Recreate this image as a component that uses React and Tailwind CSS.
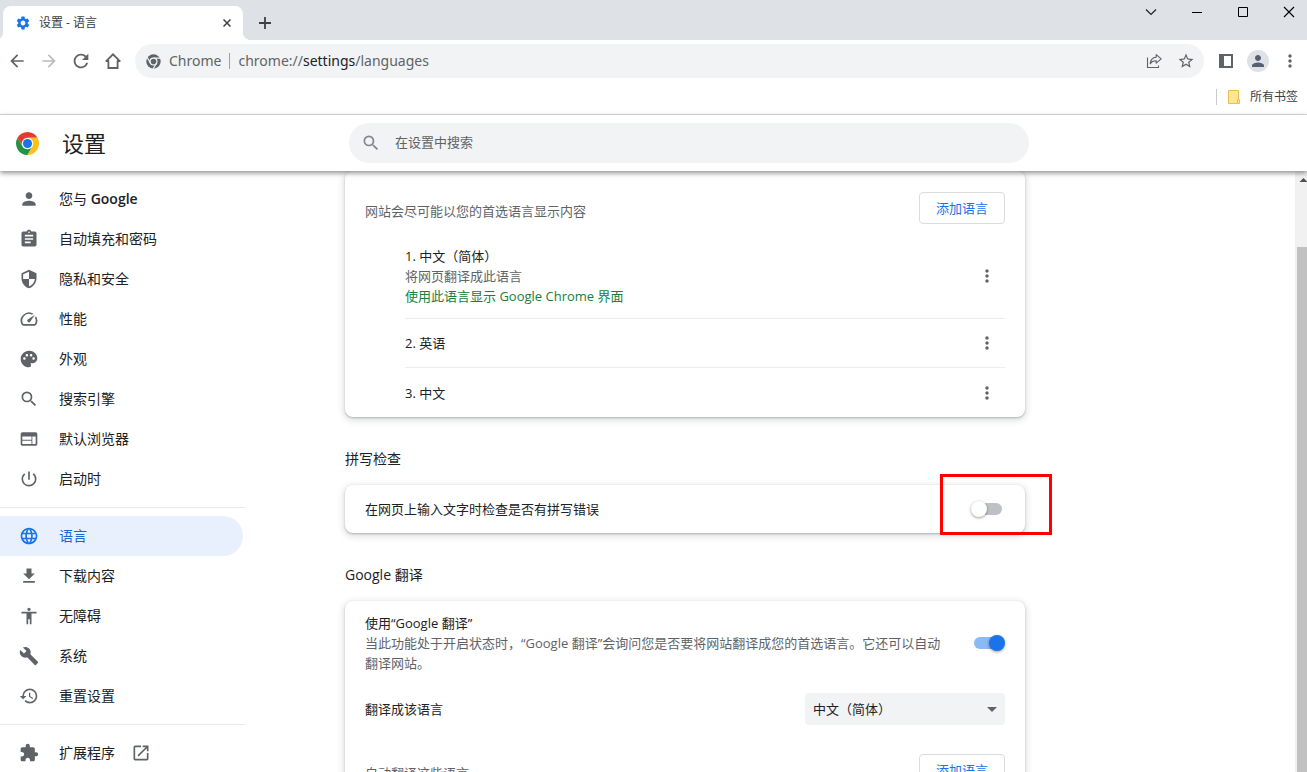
import { useState } from "react";
import {
  MdAccessibility,
  MdArrowBack,
  MdArrowDropDown,
  MdArrowForward,
  MdAssignment,
  MdBuild,
  MdExtension,
  MdFileDownload,
  MdLanguage,
  MdMoreVert,
  MdOpenInNew,
  MdPalette,
  MdPerson,
  MdPowerSettingsNew,
  MdRefresh,
  MdRestore,
  MdSearch,
  MdSecurity,
  MdSettings,
  MdSpeed,
  MdStarBorder,
  MdWeb,
} from "react-icons/md";

const mainLinks = [
  { id: "people", icon: MdPerson, label: <>您与 <span className="font-semibold">Google</span></> },
  { id: "autofill", icon: MdAssignment, label: "自动填充和密码" },
  { id: "privacy", icon: MdSecurity, label: "隐私和安全" },
  { id: "performance", icon: MdSpeed, label: "性能" },
  { id: "appearance", icon: MdPalette, label: "外观" },
  { id: "search", icon: MdSearch, label: "搜索引擎" },
  { id: "defaultBrowser", icon: MdWeb, label: "默认浏览器" },
  { id: "onStartup", icon: MdPowerSettingsNew, label: "启动时" },
];

const advancedLinks = [
  { id: "languages", icon: MdLanguage, label: "语言" },
  { id: "downloads", icon: MdFileDownload, label: "下载内容" },
  { id: "accessibility", icon: MdAccessibility, label: "无障碍" },
  { id: "system", icon: MdBuild, label: "系统" },
  { id: "reset", icon: MdRestore, label: "重置设置" },
];

const languages = [
  {
    name: "1. 中文（简体）",
    target: "将网页翻译成此语言",
    display: "使用此语言显示 Google Chrome 界面",
  },
  { name: "2. 英语" },
  { name: "3. 中文" },
];

function ChromeLogo() {
  return (
    <svg viewBox="0 0 48 48" className="size-[23px]" aria-hidden="true">
      <circle cx="24" cy="24" r="13" fill="#fff" />
      <path fill="#e33b2e" d="M24 12H44.78A24 24 0 0 0 3.22 12L13.61 30A12 12 0 0 1 24 12z" />
      <path fill="#229342" d="M13.61 30L3.22 12A24 24 0 0 0 24 48L34.39 30A12 12 0 0 1 13.61 30z" />
      <path fill="#fbc116" d="M34.39 30L24 48A24 24 0 0 0 44.78 12H24A12 12 0 0 1 34.39 30z" />
      <circle cx="24" cy="24" r="9.5" fill="#1a73e8" />
    </svg>
  );
}

function ChromeMono() {
  return (
    <svg viewBox="0 0 48 48" className="size-[15px]" aria-hidden="true">
      <circle cx="24" cy="24" r="23" fill="#5f6368" />
      <g fill="none" stroke="#f1f3f4" strokeWidth="4">
        <circle cx="24" cy="24" r="11" />
        <path d="M24 13H46M14.5 29.5L3.5 10.5M33.5 29.5L22.5 48" />
      </g>
    </svg>
  );
}

function ToolbarButton({ label, children }) {
  return (
    <button type="button" aria-label={label} className="flex size-8 shrink-0 items-center justify-center text-[#5f6368]">
      {children}
    </button>
  );
}

function TabStrip() {
  return (
    <div className="flex h-10 shrink-0 justify-between bg-[#dee1e6]">
      <div className="flex items-end pl-[3px]">
        <div className="relative flex h-[34px] w-60 items-center rounded-t-lg bg-white pr-2 pl-3 before:absolute before:bottom-0 before:-left-2 before:size-2 before:bg-[radial-gradient(circle_at_top_left,transparent_8px,white_8px)] after:absolute after:-right-2 after:bottom-0 after:size-2 after:bg-[radial-gradient(circle_at_top_right,transparent_8px,white_8px)]">
          <MdSettings className="size-4 text-[#1a73e8]" />
          <span className="ml-2 flex-1 text-xs text-[#3c4043]">设置 - 语言</span>
          <button type="button" aria-label="关闭标签页" className="flex size-4 items-center justify-center">
            <svg viewBox="0 0 8 8" className="size-2" fill="none" stroke="#3c4043" strokeWidth="1.5">
              <path d="M.5.5l7 7M7.5.5l-7 7" />
            </svg>
          </button>
        </div>
        <button type="button" aria-label="新标签页" className="ml-3 flex h-[34px] w-5 items-center justify-center">
          <svg viewBox="0 0 12 12" className="size-3" fill="none" stroke="#3c4043" strokeWidth="1.8">
            <path d="M6 0v12M0 6h12" />
          </svg>
        </button>
      </div>
      <div className="flex h-6 items-center gap-[30px] pr-[10px]">
        <button type="button" aria-label="搜索标签页" className="size-4">
          <svg viewBox="0 0 16 16" className="size-4" fill="none" stroke="#202124" strokeWidth="1.2">
            <path d="M3 5.5l5 5 5-5" />
          </svg>
        </button>
        <button type="button" aria-label="最小化" className="size-4">
          <svg viewBox="0 0 16 16" className="size-4" fill="none" stroke="#000">
            <path d="M3 8.5h10" />
          </svg>
        </button>
        <button type="button" aria-label="最大化" className="size-4">
          <svg viewBox="0 0 16 16" className="size-4" fill="none" stroke="#000">
            <path d="M3.5 3.5h9v9h-9z" />
          </svg>
        </button>
        <button type="button" aria-label="关闭" className="size-4">
          <svg viewBox="0 0 16 16" className="size-4" fill="none" stroke="#000" strokeWidth="1.1">
            <path d="M3 3l10 10M13 3L3 13" />
          </svg>
        </button>
      </div>
    </div>
  );
}

function Toolbar() {
  return (
    <div className="flex h-[42px] shrink-0 items-center px-px">
      <ToolbarButton label="后退"><MdArrowBack className="size-5" /></ToolbarButton>
      <ToolbarButton label="前进"><MdArrowForward className="size-5 text-[#babcbe]" /></ToolbarButton>
      <ToolbarButton label="重新加载"><MdRefresh className="size-[22px]" /></ToolbarButton>
      <ToolbarButton label="主页">
        <svg viewBox="0 0 16 16" className="size-4" fill="none" stroke="#5f6368" strokeWidth="1.8">
          <path d="M.7 8.6L8 1.3l7.3 7.3M1 8h3M15 8h-3M3.4 7.5V15h9.2V7.5" />
        </svg>
      </ToolbarButton>
      <div className="mx-1.5 flex h-[34px] flex-1 items-center rounded-full bg-[#f1f3f4] pr-0.5 pl-[11px] font-['Noto_Sans','Noto_Sans_CJK_SC',sans-serif] text-sm text-[#5f6368]">
        <ChromeMono />
        <span className="ml-2">Chrome</span>
        <span className="mx-2 h-4 w-px bg-[#9aa0a6]" />
        <div role="textbox" aria-label="地址和搜索栏" tabIndex={0} className="flex-1">
          chrome://<span className="text-[#202124]">settings</span>/languages
        </div>
        <ToolbarButton label="分享此页">
          <svg viewBox="0 0 16 16" className="size-4" fill="none" stroke="#5f6368" strokeWidth="1.1">
            <path d="M1.5 4.5v10h11v-2" />
            <path strokeLinejoin="round" d="M10.2 1.6l5 4.3-5 4.3V7.8C7.4 7.7 5.6 8.6 4.2 10.8c.3-3.6 2.4-6.3 6-6.7z" />
          </svg>
        </ToolbarButton>
        <ToolbarButton label="为此标签页添加书签"><MdStarBorder className="size-[18px]" /></ToolbarButton>
      </div>
      <ToolbarButton label="侧边栏">
        <svg viewBox="0 0 14 14" className="size-3.5">
          <path fill="#5f6368" fillRule="evenodd" d="M0 0h14v14H0zM5 2v10h7V2z" />
        </svg>
      </ToolbarButton>
      <ToolbarButton label="您">
        <span className="flex size-[22px] items-center justify-center rounded-full bg-[#dee1e6]">
          <MdPerson className="size-[18px] text-[#565e71]" />
        </span>
      </ToolbarButton>
      <ToolbarButton label="自定义及控制"><MdMoreVert className="size-5" /></ToolbarButton>
    </div>
  );
}

function BookmarksBar() {
  return (
    <div className="flex h-[33px] shrink-0 items-center justify-end border-b border-[#dadce0] pr-[9px] pb-[3px]">
      <span className="h-4 w-px bg-[#c8cbcf]" />
      <button type="button" className="ml-[11px] flex items-center gap-[10px] text-xs text-[#3c4043]">
        <svg viewBox="0 0 12 14" className="h-3.5 w-3" fill="#ffe694" stroke="#e8c24a">
          <path d="M.5.5h10v13H.5z" />
          <path d="M9.5 9.5h2v4h-2z" />
        </svg>
        所有书签
      </button>
    </div>
  );
}

function SettingsHeader() {
  return (
    <header className="z-10 flex h-14 shrink-0 items-center bg-white shadow-[0_2px_5px_rgba(60,64,67,0.6)]">
      <div className="flex w-[349px] shrink-0 items-center gap-[23px] pl-4">
        <ChromeLogo />
        <h1 className="text-[22px] leading-8 text-[#202124]">设置</h1>
      </div>
      <label className="flex h-10 max-w-[680px] flex-1 items-center gap-[14px] rounded-full bg-[#f1f3f4] pl-3 text-[#80868b]">
        <MdSearch className="size-5" />
        <input
          type="search"
          aria-label="在设置中搜索"
          placeholder="在设置中搜索"
          className="flex-1 bg-transparent text-[13px] text-[#202124] outline-none placeholder:text-[#5f6368]"
        />
      </label>
    </header>
  );
}

function NavLink({ item, active }) {
  const Icon = item.icon;
  return (
    <a
      href={`#${item.id}`}
      className={`mr-0.5 flex h-10 items-center gap-5 rounded-r-full pl-[19px] text-sm ${
        active ? "bg-[#e8f0fe] text-[#1967d2]" : "text-[#202124]"
      }`}
    >
      <Icon className={`size-5 ${active ? "text-[#1a73e8]" : "text-[#5f6368]"}`} />
      <span>{item.label}</span>
    </a>
  );
}

function Sidebar() {
  return (
    <nav className="w-[245px] shrink-0 overflow-hidden pt-2">
      {mainLinks.map((item) => (
        <NavLink key={item.id} item={item} />
      ))}
      <hr className="my-2 border-[#e8eaed]" />
      {advancedLinks.map((item) => (
        <NavLink key={item.id} item={item} active={item.id === "languages"} />
      ))}
      <hr className="my-2 border-[#e8eaed]" />
      <a href="#extensions" className="flex h-10 items-center pl-[19px] text-sm text-[#202124]">
        <MdExtension className="size-5 text-[#5f6368]" />
        <span className="ml-5">扩展程序</span>
        <MdOpenInNew className="ml-4 size-5 text-[#5f6368]" />
      </a>
    </nav>
  );
}

function Card({ className = "", children }) {
  return (
    <div className={`rounded-lg bg-white shadow-[0_1px_2px_rgba(60,64,67,0.3),0_2px_6px_2px_rgba(60,64,67,0.15)] ${className}`}>
      {children}
    </div>
  );
}

function SectionTitle({ children }) {
  return <h2 className="pt-8 pb-4 text-sm leading-5 text-[#202124]">{children}</h2>;
}

function Toggle({ id, checked, onChange }) {
  return (
    <input
      id={id}
      type="checkbox"
      role="switch"
      checked={checked}
      onChange={(e) => onChange(e.target.checked)}
      className="relative h-4 w-[34px] shrink-0 cursor-pointer appearance-none before:absolute before:top-0.5 before:left-[3px] before:h-3 before:w-7 before:rounded-full before:bg-[#bdc1c6] after:absolute after:top-0 after:left-0 after:size-4 after:rounded-full after:bg-white after:shadow-[0_1px_3px_rgba(0,0,0,0.4)] checked:before:bg-[#8cb8f4] checked:after:left-[18px] checked:after:bg-[#1a73e8]"
    />
  );
}

function AddLanguageRow({ text }) {
  return (
    <div className="flex items-end justify-between px-5 pt-[21px] pb-[10px]">
      <span className="leading-[26px] text-[#5f6368]">{text}</span>
      <button type="button" className="h-8 rounded border border-[#dadce0] px-4 text-[#1a73e8]">
        添加语言
      </button>
    </div>
  );
}

function LanguageItem({ language }) {
  return (
    <li className="flex min-h-[49px] items-center justify-between py-3">
      <div>
        <div>{language.name}</div>
        {language.target && <div className="text-[#5f6368]">{language.target}</div>}
        {language.display && <div className="text-[#188038]">{language.display}</div>}
      </div>
      <button type="button" aria-label={`${language.name} 更多操作`} className="flex w-9 justify-center text-[#5f6368]">
        <MdMoreVert className="size-5" />
      </button>
    </li>
  );
}

function LanguageSettings() {
  const [spellcheck, setSpellcheck] = useState(false);
  const [translate, setTranslate] = useState(true);
  const [target, setTarget] = useState("zh-CN");

  return (
    <main className="min-w-0 flex-1 overflow-hidden pr-10 pl-[100px] text-[13px] leading-5 text-[#202124]">
      <div className="max-w-[680px]">
        <Card>
          <AddLanguageRow text="网站会尽可能以您的首选语言显示内容" />
          <ul className="mr-5 ml-[60px] divide-y divide-[#ededed]">
            {languages.map((language) => (
              <LanguageItem key={language.name} language={language} />
            ))}
          </ul>
        </Card>

        <SectionTitle>拼写检查</SectionTitle>
        <Card className="relative flex min-h-12 items-center justify-between px-5">
          <label htmlFor="spellcheck">在网页上输入文字时检查是否有拼写错误</label>
          <Toggle id="spellcheck" checked={spellcheck} onChange={setSpellcheck} />
          {/* Highlight around the switch */}
          <div className="pointer-events-none absolute -top-[11px] -right-[27px] h-[61px] w-28 border-3 border-[#ff0000]" />
        </Card>

        <SectionTitle>Google 翻译</SectionTitle>
        <Card>
          <div className="flex items-center justify-between gap-7 px-5 py-3">
            <label htmlFor="translate">
              <span className="block">使用“Google 翻译”</span>
              <span className="block text-[#5f6368]">
                当此功能处于开启状态时，“Google 翻译”会询问您是否要将网站翻译成您的首选语言。它还可以自动翻译网站。
              </span>
            </label>
            <Toggle id="translate" checked={translate} onChange={setTranslate} />
          </div>
          <div className="flex items-center justify-between px-5 py-2">
            <label htmlFor="target">翻译成该语言</label>
            <div className="relative">
              <select
                id="target"
                value={target}
                onChange={(e) => setTarget(e.target.value)}
                className="block h-8 w-[200px] appearance-none rounded bg-[#f1f3f4] px-2"
              >
                <option value="zh-CN">中文（简体）</option>
                <option value="en">英语</option>
              </select>
              <MdArrowDropDown className="pointer-events-none absolute top-1 right-px size-6 text-[#5f6368]" />
            </div>
          </div>
          <AddLanguageRow text="自动翻译这些语言" />
        </Card>
      </div>
    </main>
  );
}

function Scrollbar() {
  return (
    <div className="flex w-3 shrink-0 flex-col overflow-hidden bg-[#f1f1f1]" aria-hidden="true">
      <svg viewBox="0 0 12 17" className="h-[17px] w-3 shrink-0">
        <path d="M4.5 11h8l-4-4z" fill="#505050" />
      </svg>
      <div className="mt-[59px] ml-0.5 flex-1 bg-[#c1c1c1]" />
    </div>
  );
}

export default function App() {
  return (
    <div className="flex h-screen flex-col overflow-hidden bg-white font-['Open_Sans','Noto_Sans_CJK_SC',sans-serif]">
      <TabStrip />
      <Toolbar />
      <BookmarksBar />
      <SettingsHeader />
      <div className="flex min-h-0 flex-1">
        <Sidebar />
        <LanguageSettings />
        <Scrollbar />
      </div>
    </div>
  );
}
